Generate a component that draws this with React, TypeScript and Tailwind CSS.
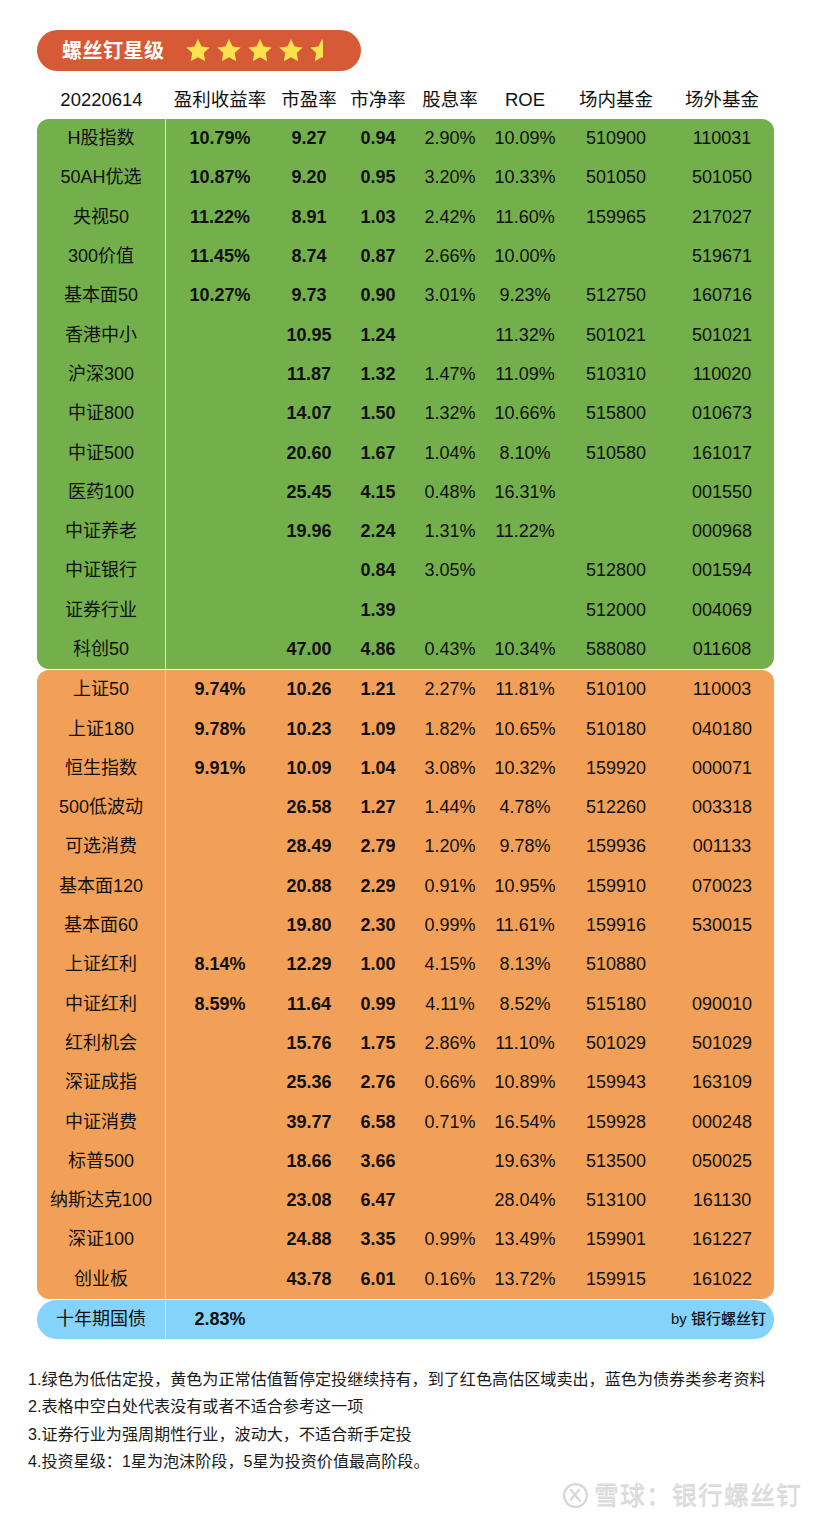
import React from "react";

type Row = [string, string, string, string, string, string, string, string];

const GREEN: Row[] = [
  ["H股指数", "10.79%", "9.27", "0.94", "2.90%", "10.09%", "510900", "110031"],
  ["50AH优选", "10.87%", "9.20", "0.95", "3.20%", "10.33%", "501050", "501050"],
  ["央视50", "11.22%", "8.91", "1.03", "2.42%", "11.60%", "159965", "217027"],
  ["300价值", "11.45%", "8.74", "0.87", "2.66%", "10.00%", "", "519671"],
  ["基本面50", "10.27%", "9.73", "0.90", "3.01%", "9.23%", "512750", "160716"],
  ["香港中小", "", "10.95", "1.24", "", "11.32%", "501021", "501021"],
  ["沪深300", "", "11.87", "1.32", "1.47%", "11.09%", "510310", "110020"],
  ["中证800", "", "14.07", "1.50", "1.32%", "10.66%", "515800", "010673"],
  ["中证500", "", "20.60", "1.67", "1.04%", "8.10%", "510580", "161017"],
  ["医药100", "", "25.45", "4.15", "0.48%", "16.31%", "", "001550"],
  ["中证养老", "", "19.96", "2.24", "1.31%", "11.22%", "", "000968"],
  ["中证银行", "", "", "0.84", "3.05%", "", "512800", "001594"],
  ["证券行业", "", "", "1.39", "", "", "512000", "004069"],
  ["科创50", "", "47.00", "4.86", "0.43%", "10.34%", "588080", "011608"],
];

const ORANGE: Row[] = [
  ["上证50", "9.74%", "10.26", "1.21", "2.27%", "11.81%", "510100", "110003"],
  ["上证180", "9.78%", "10.23", "1.09", "1.82%", "10.65%", "510180", "040180"],
  ["恒生指数", "9.91%", "10.09", "1.04", "3.08%", "10.32%", "159920", "000071"],
  ["500低波动", "", "26.58", "1.27", "1.44%", "4.78%", "512260", "003318"],
  ["可选消费", "", "28.49", "2.79", "1.20%", "9.78%", "159936", "001133"],
  ["基本面120", "", "20.88", "2.29", "0.91%", "10.95%", "159910", "070023"],
  ["基本面60", "", "19.80", "2.30", "0.99%", "11.61%", "159916", "530015"],
  ["上证红利", "8.14%", "12.29", "1.00", "4.15%", "8.13%", "510880", ""],
  ["中证红利", "8.59%", "11.64", "0.99", "4.11%", "8.52%", "515180", "090010"],
  ["红利机会", "", "15.76", "1.75", "2.86%", "11.10%", "501029", "501029"],
  ["深证成指", "", "25.36", "2.76", "0.66%", "10.89%", "159943", "163109"],
  ["中证消费", "", "39.77", "6.58", "0.71%", "16.54%", "159928", "000248"],
  ["标普500", "", "18.66", "3.66", "", "19.63%", "513500", "050025"],
  ["纳斯达克100", "", "23.08", "6.47", "", "28.04%", "513100", "161130"],
  ["深证100", "", "24.88", "3.35", "0.99%", "13.49%", "159901", "161227"],
  ["创业板", "", "43.78", "6.01", "0.16%", "13.72%", "159915", "161022"],
];

const HEAD = ["20220614", "盈利收益率", "市盈率", "市净率", "股息率", "ROE", "场内基金", "场外基金"];

const NOTES = [
  "1.绿色为低估定投，黄色为正常估值暂停定投继续持有，到了红色高估区域卖出，蓝色为债券类参考资料",
  "2.表格中空白处代表没有或者不适合参考这一项",
  "3.证券行业为强周期性行业，波动大，不适合新手定投",
  "4.投资星级：1星为泡沫阶段，5星为投资价值最高阶段。",
];

// column widths add up to the 737px table
const COLS = "grid grid-cols-[129px_108px_70px_68px_76px_74px_108px_104px]";

function Star({ half = false }: { half?: boolean }) {
  return (
    <svg width="26" height="25" viewBox="0 0 24 23">
      {half && (
        <defs>
          <clipPath id="halfstar">
            <rect x="0" y="0" width="13" height="23" />
          </clipPath>
        </defs>
      )}
      <path
        d="M12 0.8l3.3 6.9 7.5 1-5.5 5.2 1.4 7.5L12 17.8l-6.7 3.6 1.4-7.5L1.2 8.7l7.5-1z"
        fill="#fbe14e"
        clipPath={half ? "url(#halfstar)" : undefined}
      />
    </svg>
  );
}

function DataRow({ row }: { row: Row }) {
  return (
    <div className={`${COLS} h-[39.3px] items-center text-[18px] text-[#111]`}>
      <div className="h-full flex items-center justify-center border-r border-[#dedede]">{row[0]}</div>
      {row.slice(1).map((v, i) => (
        <div key={i} className={`text-center ${i < 3 ? "font-bold" : ""}`}>
          {v}
        </div>
      ))}
    </div>
  );
}

export default function App() {
  return (
    <div
      className="w-[826px] h-[1518px] bg-white overflow-hidden"
      style={{ fontFamily: "'Liberation Sans', 'Noto Sans CJK SC', sans-serif" }}
    >
      {/* title pill */}
      <div className="pt-[30px] pl-[37px]">
        <div className="w-[324px] h-[41px] rounded-full bg-[#d65a36] flex items-center pl-[25px]">
          <span className="text-white font-bold text-[20px] tracking-[0.5px]">螺丝钉星级</span>
          <div className="flex items-center gap-[5px] ml-[20px]">
            <Star />
            <Star />
            <Star />
            <Star />
            <Star half />
          </div>
        </div>
      </div>

      {/* header */}
      <div className={`${COLS} ml-[37px] w-[737px] h-[48px] pt-[10px] items-center text-[18.5px] text-[#111]`}>
        {HEAD.map((h) => (
          <div key={h} className="text-center">
            {h}
          </div>
        ))}
      </div>

      <div className="ml-[37px] w-[737px]">
        <div className="bg-[#73af4b] rounded-xl">
          {GREEN.map((r) => (
            <DataRow key={r[0]} row={r} />
          ))}
        </div>
        <div className="bg-[#f2a057] rounded-xl mt-[1px]">
          {ORANGE.map((r) => (
            <DataRow key={r[0]} row={r} />
          ))}
        </div>
        <div className={`${COLS} bg-[#84d3fa] rounded-[20px] h-[39px] mt-[1px] items-center text-[#111]`}>
          <div className="h-full flex items-center justify-center border-r border-[#dedede] text-[18px]">十年期国债</div>
          <div className="text-center font-bold text-[18px]">2.83%</div>
          <div className="col-span-6 text-right pr-[8px] text-[15px] font-medium">by 银行螺丝钉</div>
        </div>
      </div>

      {/* notes */}
      <div className="pl-[28px] pt-[27px] text-[16.1px] leading-[27.3px] text-[#1a1a1a]">
        {NOTES.map((n) => (
          <div key={n}>{n}</div>
        ))}
      </div>

      {/* watermark */}
      <div className="flex justify-end items-center pr-[24px] mt-[2px] gap-[5px] text-[#dedede] text-[25px] [text-shadow:0_1px_1px_rgba(0,0,0,0.18)]">
        <svg width="27" height="27" viewBox="0 0 26 26" fill="none" stroke="#d8d8d8" strokeWidth="2.2">
          <circle cx="13" cy="13" r="11" />
          <path d="M8 7c3 3 6 8 10 12M17 7c-2 2-5 5-9 11" />
        </svg>
        <span className="tracking-[1px]">雪球：银行螺丝钉</span>
      </div>
    </div>
  );
}
